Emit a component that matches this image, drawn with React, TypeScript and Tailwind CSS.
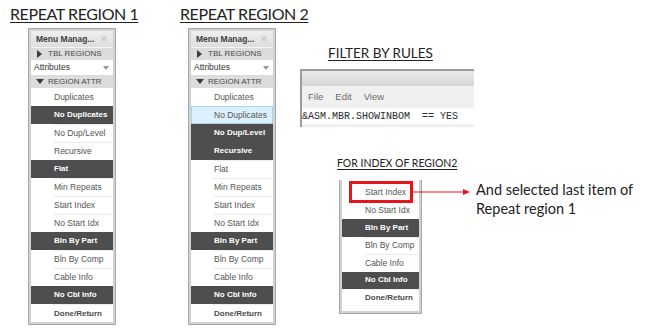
import React from "react";

type Kind = "normal" | "dark" | "sel" | "bold";
type Item = { label: string; kind?: Kind };

const P1: Item[] = [
  { label: "Duplicates" },
  { label: "No Duplicates", kind: "dark" },
  { label: "No Dup/Level" },
  { label: "Recursive" },
  { label: "Flat", kind: "dark" },
  { label: "Min Repeats" },
  { label: "Start Index" },
  { label: "No Start Idx" },
  { label: "Bln By Part", kind: "dark" },
  { label: "Bln By Comp" },
  { label: "Cable Info" },
  { label: "No Cbl Info", kind: "dark" },
  { label: "Done/Return", kind: "bold" },
];

const P2: Item[] = [
  { label: "Duplicates" },
  { label: "No Duplicates", kind: "sel" },
  { label: "No Dup/Level", kind: "dark" },
  { label: "Recursive", kind: "dark" },
  { label: "Flat" },
  { label: "Min Repeats" },
  { label: "Start Index" },
  { label: "No Start Idx" },
  { label: "Bln By Part", kind: "dark" },
  { label: "Bln By Comp" },
  { label: "Cable Info" },
  { label: "No Cbl Info", kind: "dark" },
  { label: "Done/Return", kind: "bold" },
];

const P3: Item[] = [
  { label: "Start Index" },
  { label: "No Start Idx" },
  { label: "Bln By Part", kind: "dark" },
  { label: "Bln By Comp" },
  { label: "Cable Info" },
  { label: "No Cbl Info", kind: "dark" },
  { label: "Done/Return", kind: "bold" },
];

const sans = { fontFamily: '"Liberation Sans", Arial, sans-serif' };
const slide = { fontFamily: 'Lato, "Open Sans", sans-serif' };

function Row({ item, first, h }: { item: Item; first: boolean; h: string }) {
  const k = item.kind ?? "normal";
  if (k === "dark") {
    return (
      <div className={`${h} bg-[#4e4e4e] pl-[23px] flex items-center text-[8px] font-bold text-white`}>
        {item.label}
      </div>
    );
  }
  if (k === "sel") {
    return (
      <div className={`${h} bg-[#dcf0fb] border border-[#a9d6ef] pl-[22px] flex items-center text-[8.5px] text-[#555]`}>
        {item.label}
      </div>
    );
  }
  return (
    <div className={`${h} pl-[22px]`}>
      <div
        className={`h-full flex items-center pl-[1px] ${first ? "" : "border-t border-[#ededed]"} ${
          k === "bold" ? "text-[8px] font-bold text-[#4a4a4a]" : "text-[8.5px] text-[#555]"
        }`}
      >
        {item.label}
      </div>
    </div>
  );
}

function Tri({ down }: { down?: boolean }) {
  return down ? (
    <svg width="8" height="6" viewBox="0 0 8 6" className="mr-[4px]">
      <path d="M0 0 H8 L4 5 Z" fill="#3a3a3a" />
    </svg>
  ) : (
    <svg width="6" height="8" viewBox="0 0 6 8" className="mr-[5px] ml-[1px]">
      <path d="M0 0 L5 4 L0 8 Z" fill="#3a3a3a" />
    </svg>
  );
}

function Panel({ items }: { items: Item[] }) {
  return (
    <div className="w-[88px] border border-[#a8a8a8] bg-[#d2d2d2] p-[2px]" style={sans}>
      <div className="bg-white flex flex-col">
        <div className="h-[16px] bg-gradient-to-b from-[#efefef] to-[#dedede] flex items-center justify-between px-[5px]">
          <span className="text-[8.5px] font-bold text-[#3e3e3e]">Menu Manag...</span>
          <span className="text-[9px] text-[#c0c0c0] leading-none">✕</span>
        </div>
        <div className="h-[13px] bg-[#dcdcdc] border-t border-[#f4f4f4] flex items-center pl-[5px] text-[8px] text-[#4a4a4a]">
          <Tri />
          TBL REGIONS
        </div>
        <div className="h-[15px] bg-white flex items-center justify-between pl-[3px] pr-[4px] text-[8.5px] text-[#333]">
          <span>Attributes</span>
          <svg width="6" height="4" viewBox="0 0 6 4">
            <path d="M0 0 H6 L3 4 Z" fill="#9a9a9a" />
          </svg>
        </div>
        <div className="h-[13px] bg-[#dcdcdc] flex items-center pl-[5px] text-[8px] text-[#4a4a4a]">
          <Tri down />
          REGION ATTR
        </div>
        <div className="flex flex-col">
          {items.map((it, i) => (
            <Row key={i} item={it} first={i === 0} h="h-[18px]" />
          ))}
        </div>
      </div>
    </div>
  );
}

export default function App() {
  return (
    <div className="w-[650px] h-[328px] bg-white flex overflow-hidden">
      {/* column 1 */}
      <div className="w-[170px] pl-[10px] pt-[3px] flex flex-col">
        <div className="text-[16px] leading-[22px] tracking-[-0.4px] text-[#222] underline underline-offset-[2px] whitespace-nowrap" style={slide}>
          REPEAT REGION 1
        </div>
        <div className="ml-[18px] mt-[3px]">
          <Panel items={P1} />
        </div>
      </div>
      {/* column 2 */}
      <div className="w-[120px] pl-[10px] pt-[3px] flex flex-col">
        <div className="text-[16px] leading-[22px] tracking-[-0.4px] text-[#222] underline underline-offset-[2px] whitespace-nowrap" style={slide}>
          REPEAT REGION 2
        </div>
        <div className="ml-[8px] mt-[3px]">
          <Panel items={P2} />
        </div>
      </div>
      {/* column 3 */}
      <div className="flex flex-col pt-[43px] ml-[10px]">
        <div className="ml-[28px] text-[13.5px] leading-[20px] text-[#222] underline underline-offset-[2px] whitespace-nowrap" style={slide}>
          FILTER BY RULES
        </div>
        <div className="mt-[6px] w-[174px] h-[58px] border-l-2 border-t-2 border-[#9c9c9c] bg-[#f0f0f0] flex flex-col">
          <div className="h-[15px] bg-gradient-to-b from-[#eaeaea] to-[#d6d6d6]" />
          <div className="h-[22px] flex items-center pl-[6px] gap-[12px] text-[9.5px] text-[#6a6a6a]" style={sans}>
            <span>File</span>
            <span>Edit</span>
            <span>View</span>
          </div>
          <div
            className="h-[16px] bg-white flex items-center text-[10px] text-[#2a2a2a] whitespace-pre"
            style={{ fontFamily: '"Liberation Mono", "DejaVu Sans Mono", monospace' }}
          >
            {"&ASM.MBR.SHOWINBOM  == YES"}
          </div>
        </div>
        <div className="ml-[37px] mt-[28px] text-[10.5px] leading-[16px] text-[#222] underline underline-offset-[2px] whitespace-nowrap" style={slide}>
          FOR INDEX OF REGION2
        </div>
        <div className="flex mt-[9px]">
          <div className="ml-[39px] relative w-[83px] border-x border-b border-[#a8a8a8] bg-[#d2d2d2] px-[2px] pb-[2px]" style={sans}>
            <div className="bg-white flex flex-col pt-[4px] pb-[4px]">
              {P3.map((it, i) => (
                <Row key={i} item={it} first={i === 0} h="h-[17.5px]" />
              ))}
            </div>
            <div className="absolute left-[9px] top-[1px] w-[64px] h-[22px] border-[3px] border-[#e8141b]" />
            <svg className="absolute left-[73px] top-[8px]" width="58" height="8" viewBox="0 0 58 8">
              <line x1="0" y1="4" x2="52" y2="4" stroke="#e8141b" strokeWidth="1.2" />
              <path d="M50 1 L57 4 L50 7 Z" fill="#e8141b" />
            </svg>
          </div>
          <div className="ml-[54px] mt-[0px] text-[14.5px] leading-[19px] text-[#222] whitespace-nowrap" style={slide}>
            And selected last item of
            <br />
            Repeat region 1
          </div>
        </div>
      </div>
    </div>
  );
}
